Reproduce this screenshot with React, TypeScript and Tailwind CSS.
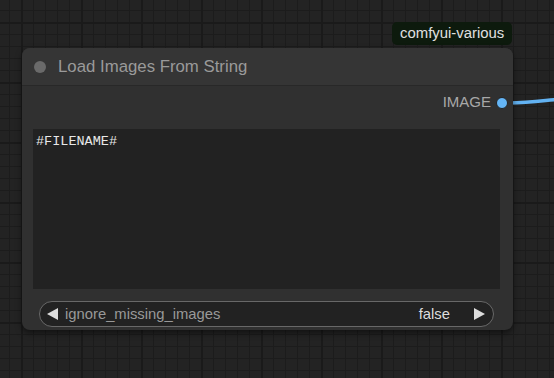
import React from "react";

export default function App() {
  return (
    <div
      className="relative w-[554px] h-[378px] overflow-hidden bg-[#232323] [background-image:linear-gradient(to_right,#1a1a1a_2px,transparent_2px),linear-gradient(to_bottom,#1a1a1a_2px,transparent_2px),linear-gradient(to_right,#1c1c1c_1px,transparent_1px),linear-gradient(to_bottom,#1c1c1c_1px,transparent_1px)] [background-size:60px_60px,60px_60px,12px_12px,12px_12px] [background-position:21px_22px,21px_22px,9px_10px,9px_10px]"
      style={{ fontFamily: "Arial, 'Liberation Sans', sans-serif" }}
    >
      {/* link wire */}
      <svg className="absolute left-0 top-0" width="554" height="378">
        <path d="M502 103 C 525 103, 535 101.5, 556 99.5" stroke="#62b2f2" strokeWidth="3.5" fill="none" />
      </svg>

      {/* badge */}
      <div className="absolute left-[392px] top-[22px] h-[23px] px-[8px] rounded-[5px] bg-[#0d1a0d] text-[#e0e0e0] text-[14.9px] leading-[23px] font-['Liberation_Sans',Arial,sans-serif]">
        comfyui-various
      </div>

      {/* node */}
      <div className="absolute left-[22px] top-[48px] w-[491px] h-[282px] rounded-[8px] bg-[#303030] shadow-[0_3px_6px_rgba(0,0,0,0.5)] flex flex-col font-['Liberation_Sans',Arial,sans-serif]">
        <div className="h-[38px] shrink-0 flex items-center rounded-t-[8px] bg-[#353535] border-b border-[#282828]">
          <div className="ml-[12px] w-[12px] h-[12px] rounded-full bg-[#6a6a6a]" />
          <div className="ml-[12px] text-[16.8px] text-[#9a9a9a]">Load Images From String</div>
        </div>
        <div className="h-[33px] shrink-0 flex items-center justify-end pr-[22px] text-[15px] text-[#a8a8a8] relative">
          IMAGE
          <div className="absolute right-[5px] top-[11px] w-[12px] h-[12px] rounded-full bg-[#64b5f6] border-[1.5px] border-[#222]" />
        </div>
        <div className="mt-[10px] ml-[11px] mr-[13px] h-[160px] bg-[#222222] pl-[3px] pt-[5px] text-[13.5px] leading-[16px] text-[#e8e8e8] font-['Liberation_Mono',monospace]">
          #FILENAME#
        </div>
        <div className="mt-[12px] ml-[17px] mr-[19px] h-[26px] rounded-full border border-[#686868] bg-[#222222] flex items-center text-[14.8px]">
          <svg className="ml-[7px]" width="12" height="12" viewBox="0 0 12 12">
            <path d="M0 6 L11 0 L11 12 Z" fill="#dddddd" />
          </svg>
          <span className="ml-[6px] text-[#999999]">ignore_missing_images</span>
          <span className="ml-auto text-[#dddddd]">false</span>
          <svg className="ml-[23px] mr-[8px]" width="12" height="12" viewBox="0 0 12 12">
            <path d="M12 6 L1 0 L1 12 Z" fill="#dddddd" />
          </svg>
        </div>
      </div>
    </div>
  );
}
